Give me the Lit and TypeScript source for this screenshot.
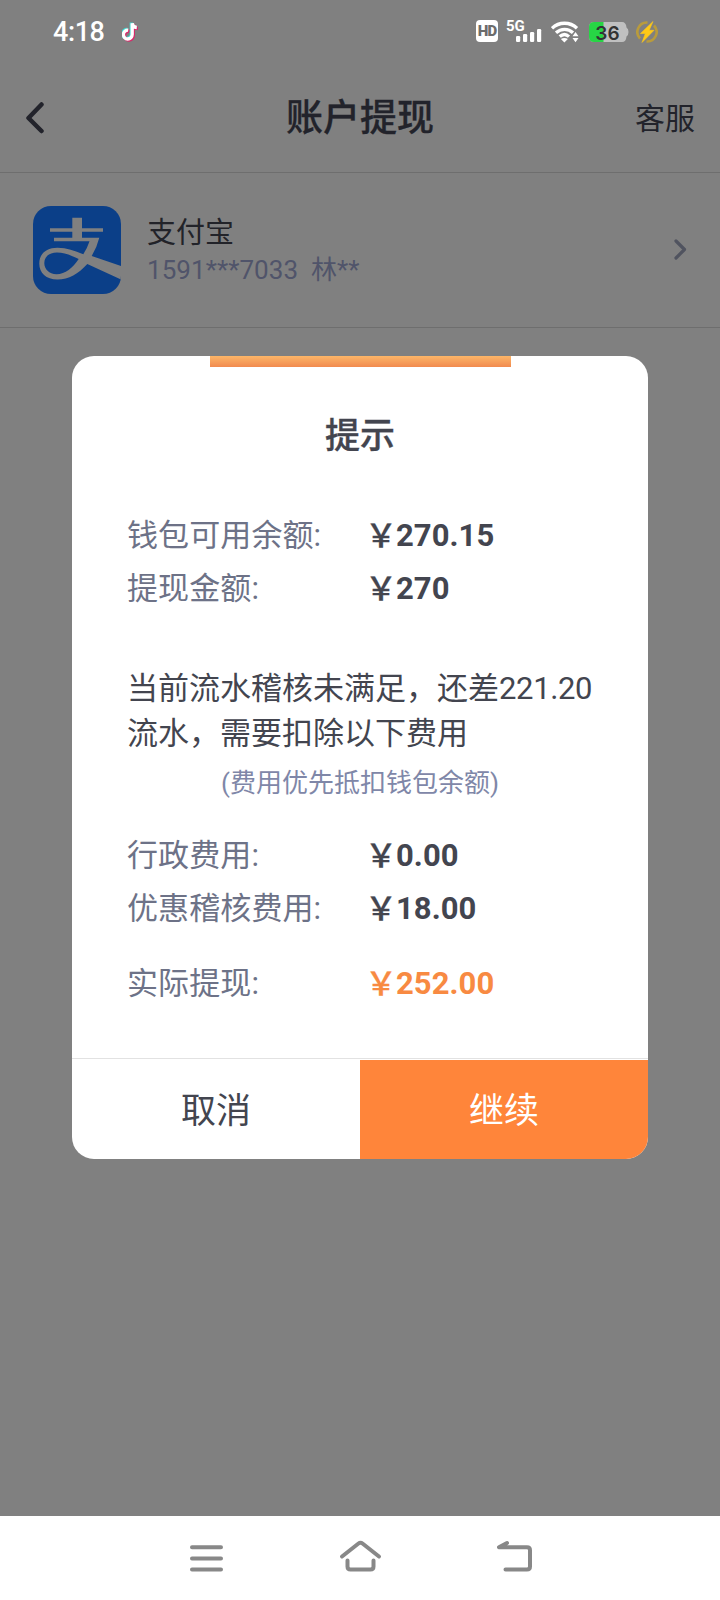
import { LitElement, html, css } from "lit";
import { customElement, property } from "lit/decorators.js";

@customElement("status-bar")
class StatusBar extends LitElement {
  static styles = css`
    :host { display: block; height: 64px; color: #fff; font-family: Roboto, "Noto Sans", sans-serif; }
    .bar { display: flex; height: 64px; align-items: center; box-sizing: border-box; padding: 0 62px 0 53px; }
    .time { font-size: 27px; font-weight: 500; line-height: 32px; width: 69px; letter-spacing: -0.4px; padding-bottom: 1px; }
    .spacer { flex: 1; }
    svg { display: block; flex: none; }
    .hd { width: 22px; height: 22px; border-radius: 4px; background: #fff; color: #6c6c6c; font-size: 15px; line-height: 23px; font-weight: 900; text-align: center; letter-spacing: -0.8px; margin-right: 9px; margin-bottom: 2px; }
    .net { position: relative; width: 36px; height: 24px; margin-right: 8px; }
    .gen { position: absolute; left: -1px; top: 0; font-size: 15px; line-height: 12px; font-weight: 700; }
    .sig { position: absolute; left: 9px; top: 9px; }
    .batt { position: relative; width: 40px; height: 20px; margin: 0 7px 0 10px; }
    .level { position: absolute; left: 0; top: 0; width: 37px; text-align: center; color: #333; font: 600 19px/23px Inter, sans-serif; letter-spacing: 0.2px; }
  `;
  render() {
    return html`<div class="bar">
      <div class="time">4:18</div>
      <svg width="18" height="20" viewBox="0 0 18 20" fill="none" stroke-width="3.300">
        <path d="M6.2 8.2a4.4 4.4 0 1 0 4 4.4V1.3c.3 2.8 2 4 4.6 4.2" stroke="#3dd6cf" transform="translate(-.9 -.7)"/>
        <path d="M6.2 8.2a4.4 4.4 0 1 0 4 4.4V1.3c.3 2.8 2 4 4.6 4.2" stroke="#d9286a" transform="translate(1.100 1)"/>
        <path d="M6.2 8.2a4.4 4.4 0 1 0 4 4.4V1.3c.3 2.8 2 4 4.6 4.2" stroke="#fff"/>
      </svg>
      <div class="spacer"></div>
      <div class="hd">HD</div>
      <div class="net">
        <div class="gen">5G</div>
        <svg class="sig" width="26" height="13" viewBox="0 0 26 13" fill="#fff">
          <rect x="0" y="7" width="4.2" height="6" rx="1.200"/><rect x="7" y="5" width="4.2" height="8" rx="1.200"/>
          <rect x="14" y="3" width="4.2" height="10" rx="1.200"/><rect x="21" y="0" width="4.2" height="13" rx="1.200"/>
        </svg>
      </div>
      <svg width="28" height="22" viewBox="0 0 28 22" fill="none" stroke="#fff" stroke-width="3.300">
        <path d="M1 7.2c7-6.600 18-6.600 25 0M5 11.700c5-4.500 12.300-4.500 17 0M8.700 15.600c3-2.600 6.500-2.600 9.300 0"/>
        <path d="M13.400 21.500l-3.500-3.400c2.200-1.500 4.800-1.500 7 0z" fill="#fff" stroke="none"/>
        <path d="M24.500 11l3 4.300h-6zM24.500 21.200l3-4.300h-6z" fill="#fff" stroke="none"/>
      </svg>
      <div class="batt">
        <svg width="40" height="20" viewBox="0 0 40 20">
          <path d="M5 0h28q4 0 4.500 5.500q2 1 2 4.500t-2 4.500Q37 20 33 20H5q-5 0-5-5V5q0-5 5-5z" fill="#c0c0c0"/>
          <path d="M14.500 0H5Q0 0 0 5v10q0 5 5 5h9.500z" fill="#27d545"/>
        </svg>
        <div class="level">36</div>
      </div>
      <svg width="22" height="22" viewBox="0 0 22 22">
        <path d="M11.500 1.500a9.500 9.500 0 0 0-7.500 16M10.500 20.500a9.500 9.500 0 0 0 7.500-16" stroke="#b99b3c" stroke-width="2.600" fill="none"/>
        <path d="M17 .5L4.500 12.500h4.800L6 21.500 18 9.300h-4.800z" fill="#ffc917" stroke="#ffc917" stroke-width=".6"/>
      </svg>
    </div>`;
  }
}

@customElement("amount-row")
class AmountRow extends LitElement {
  @property() label = "";
  @property() value = "";
  @property({ type: Boolean }) accent = false;
  static styles = css`
    :host { display: flex; height: 53px; align-items: center; font: 31px/53px Roboto, "Noto Sans CJK SC", sans-serif; }
    .label { width: 238px; color: #6d7287; white-space: nowrap; letter-spacing: 0.1px; }
    .value { color: #43454f; font-weight: 700; white-space: nowrap; display: flex; letter-spacing: 0.05px; }
    .yen { width: 31px; font-size: 32px; line-height: 48px; font-weight: 500; font-family: "Noto Sans CJK SC", sans-serif; -webkit-text-stroke: 0.3px currentColor; }
    .accent { color: #f88a42; }
  `;
  render() {
    return html`<span class="label">${this.label}:</span>
      <span class="value ${this.accent ? "accent" : ""}"><span class="yen">￥</span>${this.value}</span>`;
  }
}

@customElement("app-root")
class AppRoot extends LitElement {
  static styles = css`
    :host { display: block; font-family: Roboto, "Noto Sans CJK SC", sans-serif; }
    .screen { position: relative; width: 720px; height: 1600px; display: flex; flex-direction: column; background: #808080; overflow: hidden; }
    .header { height: 109px; box-sizing: border-box; border-bottom: 1px solid #6e6e6e; display: grid; grid-template-columns: 1fr auto 1fr; align-items: center; padding: 0 25px; color: #22232b; }
    .title { font-size: 37px; font-weight: 500; line-height: 50px; padding-top: 2px; -webkit-text-stroke: 0.3px #22232b; }
    .service { justify-self: end; font-size: 30px; line-height: 40px; padding-top: 2px; }
    svg { display: block; flex: none; }
    .account { height: 155px; box-sizing: border-box; border-bottom: 1px solid #6e6e6e; display: flex; align-items: center; padding: 0 33px; }
    .info { flex: 1; margin-left: 26px; padding-top: 2px; }
    .name { font-size: 29px; line-height: 38px; color: #222329; }
    .number { font-size: 26px; line-height: 36px; color: #50546a; white-space: pre; letter-spacing: 0.05px; }
    .rest { flex: 1; }
    .nav { height: 84px; background: #fff; }
    .dialog { position: absolute; left: 72px; top: 356px; width: 576px; height: 803px; border-radius: 22px; background: #fff; overflow: hidden; display: flex; flex-direction: column; }
    .strip { width: 301px; height: 11px; margin-left: 138px; background: linear-gradient(#fdb668, #f18a4f); }
    .heading { margin-top: 40px; height: 60px; font-size: 35px; line-height: 60px; font-weight: 500; color: #43454f; text-align: center; -webkit-text-stroke: 0.3px #43454f; }
    .body { flex: 1; padding: 42px 54px 0 55px; }
    .notice { margin-top: 51px; font-size: 31px; line-height: 45px; color: #43454f; white-space: nowrap; }
    .digits { letter-spacing: -0.35px; }
    .hint { margin: 7px 1px 26px 0; font-size: 26px; line-height: 40px; color: #7f87a8; text-align: center; }
    .final { margin-top: 22px; }
    .actions { display: flex; border-top: 1px solid #e2e2e2; height: 100px; }
    .btn { flex: 1; font-size: 35px; line-height: 104px; height: 99px; text-align: center; color: #43454f; margin-top: 1px; }
    .primary { background: #ff853a; color: #fff; }
  `;
  render() {
    return html`<div class="screen">
      <status-bar></status-bar>
      <div class="header">
        <svg width="20" height="32" viewBox="0 0 20 32" fill="none" stroke="#22232b" stroke-width="4.500" stroke-linecap="round" stroke-linejoin="round"><path d="M16.500 2.500L3.500 16l13 13"/></svg>
        <div class="title">账户提现</div>
        <div class="service">客服</div>
      </div>
      <div class="account">
        <svg width="88" height="88" viewBox="0 0 88 88">
          <defs><clipPath id="r"><rect width="88" height="88" rx="18"/></clipPath></defs>
          <g clip-path="url(#r)">
            <rect width="88" height="88" fill="#0b3f88"/>
            <path d="M39.300 11.700h9.700v10.600h21v3.500H49v6h17.300q-2.300 9.500-7.600 18.200L88 60v13.500L54.300 58C45 68 36 73.500 24.500 73.500 13 73.500 6.300 67 6.300 57.500S13 41.700 24.500 41.700c9.500 0 17 3 25.800 6.500q4-6 6.200-12.900H21v-3.500h18.300v-6H17v-3.500h22.300zM45.700 53c-8-3.800-14-6.500-21.700-6.500-8 0-12.700 4.500-12.700 10.500S16 68.200 23.500 68.200c9 0 16-6.200 22.200-15.200z" fill="#808080" fill-rule="evenodd"/>
          </g>
        </svg>
        <div class="info">
          <div class="name">支付宝</div>
          <div class="number">1591***7033  林**</div>
        </div>
        <svg width="14" height="22" viewBox="0 0 14 22" fill="none" stroke="#50535f" stroke-width="3.200" stroke-linecap="round" stroke-linejoin="round"><path d="M3 2l8.500 8.500L3 19"/></svg>
      </div>
      <div class="rest"></div>
      <div class="nav">
        <svg width="720" height="84" fill="none" stroke="#888" stroke-width="4" stroke-linecap="round" stroke-linejoin="round">
          <path d="M192 31.300h29M192 42.500h29M192 53.500h29"/>
          <path d="M342 40.500L358.500 27.500q2-1.600 4 0L379 40.500M347.500 44.500V50.500q0 3 3 3h20q3 0 3-3v-6"/>
          <path d="M507 27l-8 4.300h28q3 0 3 3v16.200q0 3-3 3h-21.500"/>
        </svg>
      </div>
      <div class="dialog">
        <div class="strip"></div>
        <div class="heading">提示</div>
        <div class="body">
          <amount-row label="钱包可用余额" value="270.15"></amount-row>
          <amount-row label="提现金额" value="270"></amount-row>
          <div class="notice">当前流水稽核未满足，还差<span class="digits">221.20</span><br />流水，需要扣除以下费用</div>
          <div class="hint">(费用优先抵扣钱包余额)</div>
          <amount-row label="行政费用" value="0.00"></amount-row>
          <amount-row label="优惠稽核费用" value="18.00"></amount-row>
          <amount-row class="final" label="实际提现" value="252.00" accent></amount-row>
        </div>
        <div class="actions">
          <div class="btn">取消</div>
          <div class="btn primary">继续</div>
        </div>
      </div>
    </div>`;
  }
}
